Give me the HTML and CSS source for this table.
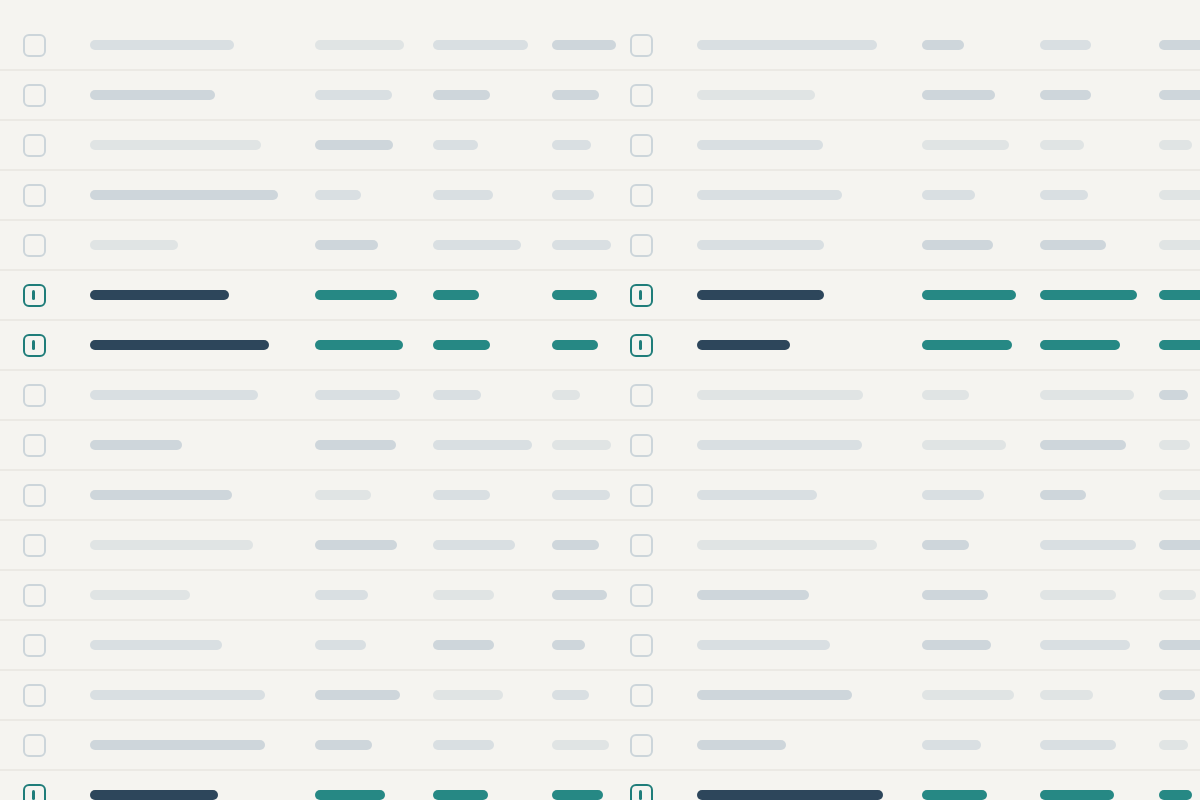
FILE: index.html
```html
<!DOCTYPE html>
<html>
<head>
<meta charset="utf-8">
<link rel="stylesheet" href="styles.css">
</head>
<body>
<div class="table">
  <div class="row">
    <span class="cb"></span><span class="bar a" style="width:144px"></span><span class="bar c" style="width:89px"></span><span class="bar a" style="width:95px"></span><span class="bar b" style="width:64px"></span>
    <span class="cb"></span><span class="bar a" style="width:180px"></span><span class="bar b" style="width:42px"></span><span class="bar a" style="width:51px"></span><span class="bar b" style="width:60px"></span>
  </div>
  <div class="row">
    <span class="cb"></span><span class="bar b" style="width:125px"></span><span class="bar a" style="width:77px"></span><span class="bar b" style="width:57px"></span><span class="bar b" style="width:47px"></span>
    <span class="cb"></span><span class="bar c" style="width:118px"></span><span class="bar b" style="width:73px"></span><span class="bar b" style="width:51px"></span><span class="bar b" style="width:60px"></span>
  </div>
  <div class="row">
    <span class="cb"></span><span class="bar c" style="width:171px"></span><span class="bar b" style="width:78px"></span><span class="bar a" style="width:45px"></span><span class="bar a" style="width:39px"></span>
    <span class="cb"></span><span class="bar a" style="width:126px"></span><span class="bar c" style="width:87px"></span><span class="bar c" style="width:44px"></span><span class="bar c" style="width:33px"></span>
  </div>
  <div class="row">
    <span class="cb"></span><span class="bar b" style="width:188px"></span><span class="bar a" style="width:46px"></span><span class="bar a" style="width:60px"></span><span class="bar a" style="width:42px"></span>
    <span class="cb"></span><span class="bar a" style="width:145px"></span><span class="bar a" style="width:53px"></span><span class="bar a" style="width:48px"></span><span class="bar c" style="width:60px"></span>
  </div>
  <div class="row">
    <span class="cb"></span><span class="bar c" style="width:88px"></span><span class="bar b" style="width:63px"></span><span class="bar a" style="width:88px"></span><span class="bar a" style="width:59px"></span>
    <span class="cb"></span><span class="bar a" style="width:127px"></span><span class="bar b" style="width:71px"></span><span class="bar b" style="width:66px"></span><span class="bar c" style="width:60px"></span>
  </div>
  <div class="row sel">
    <span class="cb on"></span><span class="bar d" style="width:139px"></span><span class="bar t" style="width:82px"></span><span class="bar t" style="width:46px"></span><span class="bar t" style="width:45px"></span>
    <span class="cb on"></span><span class="bar d" style="width:127px"></span><span class="bar t" style="width:94px"></span><span class="bar t" style="width:97px"></span><span class="bar t" style="width:60px"></span>
  </div>
  <div class="row sel">
    <span class="cb on"></span><span class="bar d" style="width:179px"></span><span class="bar t" style="width:88px"></span><span class="bar t" style="width:57px"></span><span class="bar t" style="width:46px"></span>
    <span class="cb on"></span><span class="bar d" style="width:93px"></span><span class="bar t" style="width:90px"></span><span class="bar t" style="width:80px"></span><span class="bar t" style="width:60px"></span>
  </div>
  <div class="row">
    <span class="cb"></span><span class="bar a" style="width:168px"></span><span class="bar a" style="width:85px"></span><span class="bar a" style="width:48px"></span><span class="bar c" style="width:28px"></span>
    <span class="cb"></span><span class="bar c" style="width:166px"></span><span class="bar c" style="width:47px"></span><span class="bar c" style="width:94px"></span><span class="bar b" style="width:29px"></span>
  </div>
  <div class="row">
    <span class="cb"></span><span class="bar b" style="width:92px"></span><span class="bar b" style="width:81px"></span><span class="bar a" style="width:99px"></span><span class="bar c" style="width:59px"></span>
    <span class="cb"></span><span class="bar a" style="width:165px"></span><span class="bar c" style="width:84px"></span><span class="bar b" style="width:86px"></span><span class="bar c" style="width:31px"></span>
  </div>
  <div class="row">
    <span class="cb"></span><span class="bar b" style="width:142px"></span><span class="bar c" style="width:56px"></span><span class="bar a" style="width:57px"></span><span class="bar a" style="width:58px"></span>
    <span class="cb"></span><span class="bar a" style="width:120px"></span><span class="bar a" style="width:62px"></span><span class="bar b" style="width:46px"></span><span class="bar c" style="width:60px"></span>
  </div>
  <div class="row">
    <span class="cb"></span><span class="bar c" style="width:163px"></span><span class="bar b" style="width:82px"></span><span class="bar a" style="width:82px"></span><span class="bar b" style="width:47px"></span>
    <span class="cb"></span><span class="bar c" style="width:180px"></span><span class="bar b" style="width:47px"></span><span class="bar a" style="width:96px"></span><span class="bar b" style="width:60px"></span>
  </div>
  <div class="row">
    <span class="cb"></span><span class="bar c" style="width:100px"></span><span class="bar a" style="width:53px"></span><span class="bar c" style="width:61px"></span><span class="bar b" style="width:55px"></span>
    <span class="cb"></span><span class="bar b" style="width:112px"></span><span class="bar b" style="width:66px"></span><span class="bar c" style="width:76px"></span><span class="bar c" style="width:37px"></span>
  </div>
  <div class="row">
    <span class="cb"></span><span class="bar a" style="width:132px"></span><span class="bar a" style="width:51px"></span><span class="bar b" style="width:61px"></span><span class="bar b" style="width:33px"></span>
    <span class="cb"></span><span class="bar a" style="width:133px"></span><span class="bar b" style="width:69px"></span><span class="bar a" style="width:90px"></span><span class="bar b" style="width:60px"></span>
  </div>
  <div class="row">
    <span class="cb"></span><span class="bar a" style="width:175px"></span><span class="bar b" style="width:85px"></span><span class="bar c" style="width:70px"></span><span class="bar a" style="width:37px"></span>
    <span class="cb"></span><span class="bar b" style="width:155px"></span><span class="bar c" style="width:92px"></span><span class="bar c" style="width:53px"></span><span class="bar b" style="width:36px"></span>
  </div>
  <div class="row">
    <span class="cb"></span><span class="bar b" style="width:175px"></span><span class="bar b" style="width:57px"></span><span class="bar a" style="width:61px"></span><span class="bar c" style="width:57px"></span>
    <span class="cb"></span><span class="bar b" style="width:89px"></span><span class="bar a" style="width:59px"></span><span class="bar a" style="width:76px"></span><span class="bar c" style="width:29px"></span>
  </div>
  <div class="row sel">
    <span class="cb on"></span><span class="bar d" style="width:128px"></span><span class="bar t" style="width:70px"></span><span class="bar t" style="width:55px"></span><span class="bar t" style="width:51px"></span>
    <span class="cb on"></span><span class="bar d" style="width:186px"></span><span class="bar t" style="width:65px"></span><span class="bar t" style="width:74px"></span><span class="bar t" style="width:33px"></span>
  </div>
</div>
</body>
</html>
```

FILE: styles.css
```css
html, body {
  margin: 0;
  padding: 0;
  background: #f5f4f0;
  overflow: hidden;
  height: 800px;
}

.table {
  padding-top: 21px;
  width: 1260px;
}

.row {
  display: grid;
  grid-template-columns: 67px 225px 118px 119px 78px 67px 225px 118px 119px 78px;
  align-items: center;
  height: 48px;
  padding-left: 23px;
  border-bottom: 2px solid #ebe9e4;
}

.cb {
  box-sizing: border-box;
  width: 23px;
  height: 23px;
  border: 2.5px solid #ccd5da;
  border-radius: 6px;
  position: relative;
}

.cb.on {
  border-color: #1f7d7a;
}

.cb.on::after {
  content: "";
  position: absolute;
  left: 7px;
  top: 4px;
  width: 3px;
  height: 10px;
  border-radius: 1.5px;
  background: #1f7d7a;
}

.bar {
  display: block;
  height: 10px;
  border-radius: 5px;
}

.bar.a { background: #d9dfe2; }
.bar.b { background: #ced6db; }
.bar.c { background: #e0e4e4; }
.bar.d { background: #2d465b; }
.bar.t { background: #268884; }
```
